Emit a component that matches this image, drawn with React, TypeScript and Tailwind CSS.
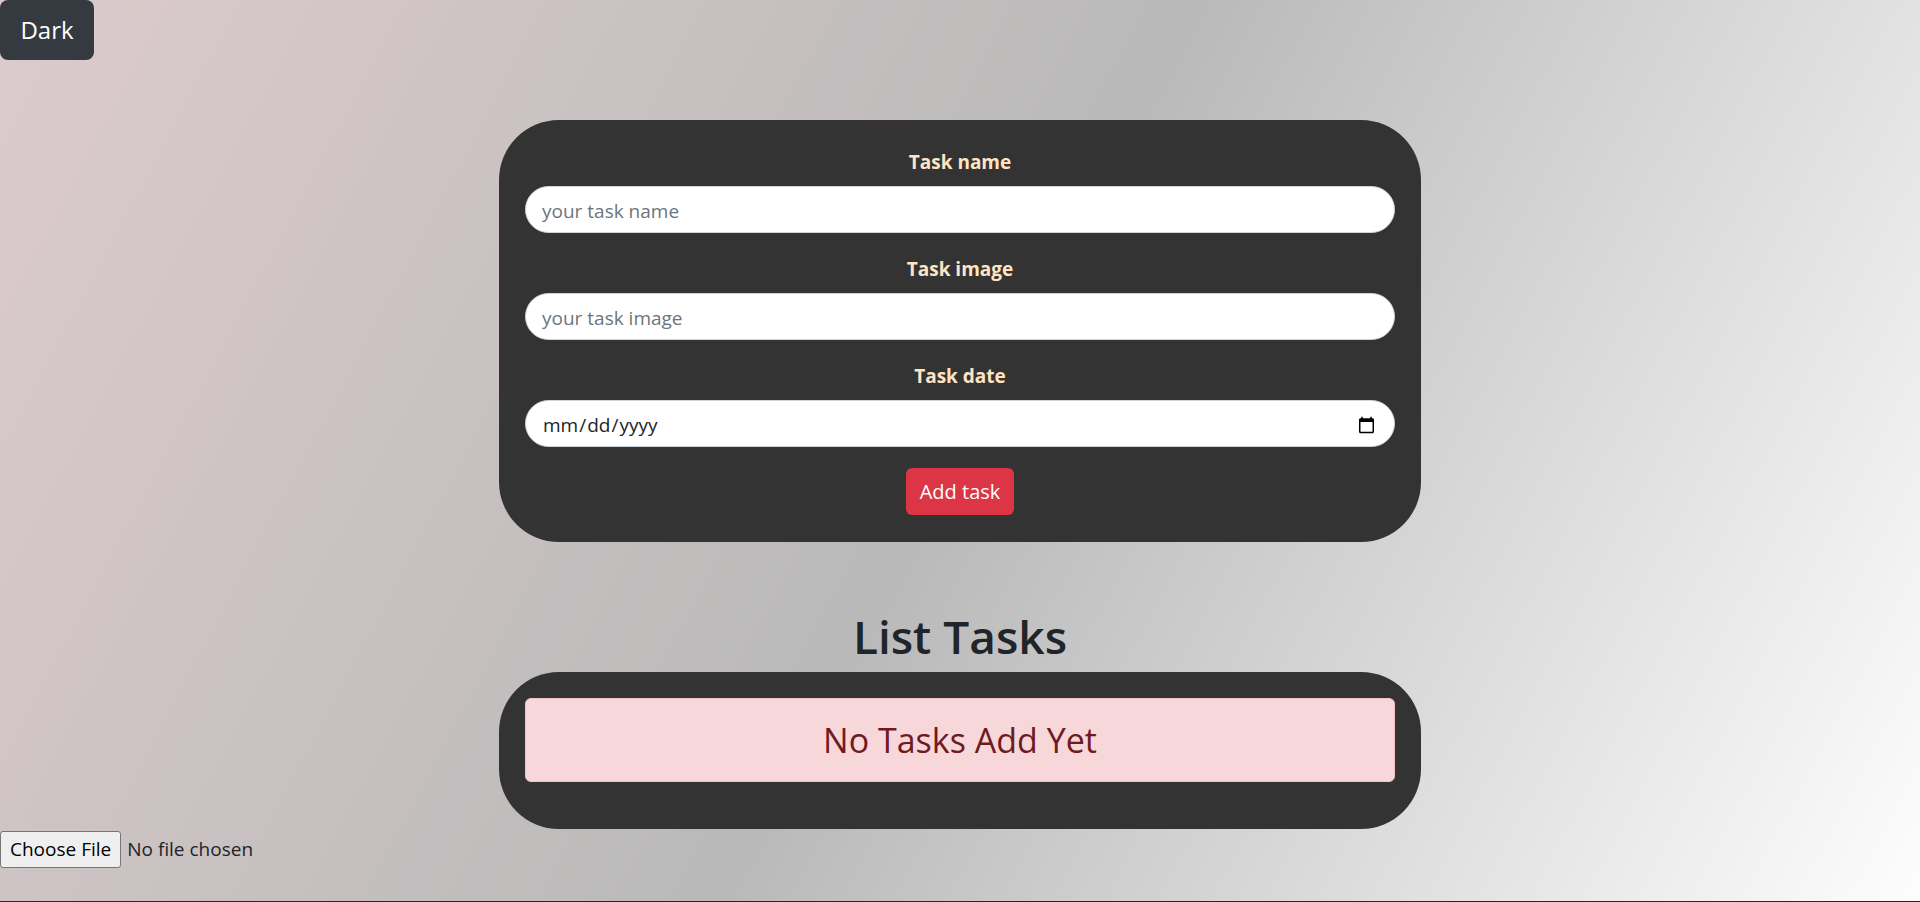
import { useState } from "react"

const font = "font-['Segoe_UI','Open_Sans',sans-serif]"

const Field = ({ label, placeholder, type = "text" }: { label: string; placeholder?: string; type?: string }) => {
    return (
        <div className="flex flex-col items-center">
            <label className="text-[19px] leading-[30px] font-bold text-[#ffe4c4] mb-[9px]">{label}</label>
            <input
                type={type}
                placeholder={placeholder}
                className="w-full h-[47px] rounded-full bg-white border border-[#ced4da] px-4 pt-[3px] text-[19px] text-[#212529] placeholder:text-[#6c757d] outline-none"
            />
        </div>
    )
}

const App = () => {
    const [dark, setDark] = useState(false)

    return (
        <div className={`${font} text-[#212529]`}>
            <div className="min-h-[901px] bg-[linear-gradient(118deg,#ddcbcc_0%,#b9b9b9_50%,#fdfdfd_100%)]">
                <button
                    onClick={() => setDark(!dark)}
                    className="w-[94px] h-[60px] rounded-lg bg-[#343a40] text-white text-[24px] leading-[36px]"
                >
                    Dark
                </button>

                {/* Add task form */}
                <div className="w-[922px] mx-auto mt-[60px] bg-[#333333] rounded-[60px] px-[26px] pt-[27px] pb-[27px] flex flex-col gap-[21px]">
                    <Field label="Task name" placeholder="your task name" />
                    <Field label="Task image" placeholder="your task image" />
                    <Field label="Task date" type="date" />
                    <div className="flex justify-center">
                        <button className="w-[108px] h-[47px] rounded-md bg-[#dc3545] text-white text-[20px]">Add task</button>
                    </div>
                </div>

                <h1 className="text-center text-[46px] leading-[65px] font-semibold mt-[62px] mb-[3px]">List Tasks</h1>

                {/* Task list */}
                <div className="w-[922px] mx-auto bg-[#333333] rounded-[60px] px-[26px] pt-[26px] pb-[47px]">
                    <div className="h-[84px] rounded-md bg-[#f8d7da] border border-[#f5c2c7] flex items-center justify-center text-[#6f1a22] text-[34px]">
                        No Tasks Add Yet
                    </div>
                </div>

                <input
                    type="file"
                    className="mt-[2px] text-[19px] text-[#212529] file:h-[37px] file:px-[9px] file:mr-[6px] file:bg-[#efefef] file:border file:border-[#767676] file:rounded-[3px] file:text-[#000]"
                />
            </div>
            <div className="h-[2px] bg-[#2b2326]" />
        </div>
    )
}

export default App
